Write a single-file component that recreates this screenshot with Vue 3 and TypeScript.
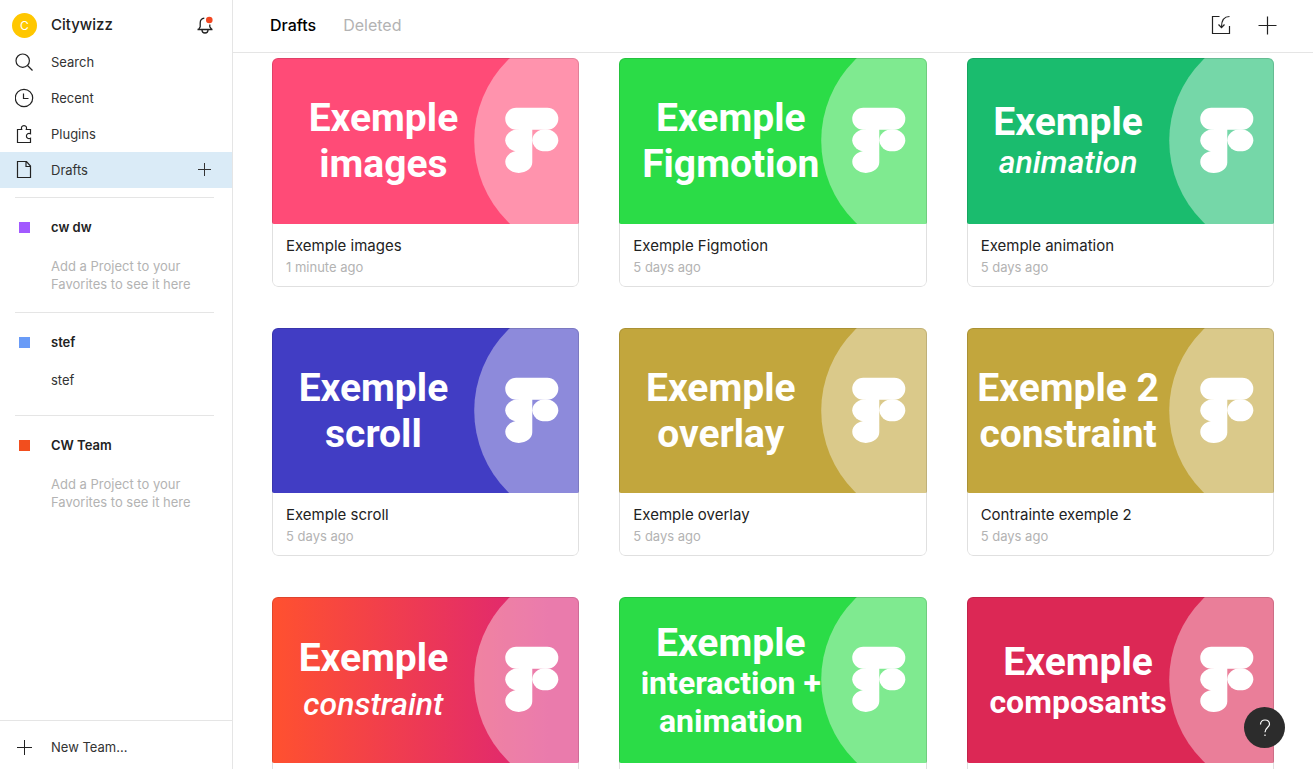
<script setup lang="ts">
import { ref } from 'vue'

interface TitleLine {
  text: string
  kind: 'big' | 'small' | 'italic' | 'italic-tall'
}

interface DraftFile {
  name: string
  edited: string
  color: string
  wide: boolean
  lines: TitleLine[]
}

interface Team {
  name: string
  color: string
  project?: string
}

const big = (text: string): TitleLine => ({ text, kind: 'big' })
const small = (text: string): TitleLine => ({ text, kind: 'small' })

const tab = ref<'drafts' | 'deleted'>('drafts')

const teams: Team[] = [
  { name: 'cw dw', color: 'purple' },
  { name: 'stef', color: 'blue', project: 'stef' },
  { name: 'CW Team', color: 'orange' },
]

const files: DraftFile[] = [
  { name: 'Exemple images', edited: '1 minute ago', color: 'pink', wide: true, lines: [big('Exemple'), big('images')] },
  { name: 'Exemple Figmotion', edited: '5 days ago', color: 'green', wide: true, lines: [big('Exemple'), big('Figmotion')] },
  { name: 'Exemple animation', edited: '5 days ago', color: 'emerald', wide: false, lines: [big('Exemple'), { text: 'animation', kind: 'italic' }] },
  { name: 'Exemple scroll', edited: '5 days ago', color: 'indigo', wide: false, lines: [big('Exemple'), big('scroll')] },
  { name: 'Exemple overlay', edited: '5 days ago', color: 'gold', wide: false, lines: [big('Exemple'), big('overlay')] },
  { name: 'Contrainte exemple 2', edited: '5 days ago', color: 'gold', wide: false, lines: [big('Exemple 2'), big('constraint')] },
  { name: 'Exemple constraint', edited: '5 days ago', color: 'sunset', wide: false, lines: [big('Exemple'), { text: 'constraint', kind: 'italic-tall' }] },
  { name: 'Exemple interaction', edited: '5 days ago', color: 'green', wide: true, lines: [big('Exemple'), small('interaction +'), small('animation')] },
  { name: 'Exemple composants', edited: '5 days ago', color: 'crimson', wide: true, lines: [big('Exemple'), small('composants')] },
]
</script>

<template>
  <div class="app">
    <aside class="sidebar">
      <div class="account">
        <button class="account-button" type="button">
          <span class="slot"><span class="avatar">C</span></span>
          <span class="account-name">Citywizz</span>
        </button>
        <button class="icon-button" type="button" aria-label="Notifications">
          <svg width="20" height="20" viewBox="0 0 20 20" fill="none" stroke="#222" stroke-width="1.3">
            <path d="M9.300 3.200C6.800 3.600 5.200 5.400 5.200 8v3.800L3.500 14.500M2.500 14.500h15M16.800 14.500l-2-2.700V9.500" />
            <path d="M7 15a3 3 0 0 0 6 0" />
            <circle cx="14.300" cy="5" r="3.300" fill="#f24822" stroke="none" />
          </svg>
        </button>
      </div>

      <nav class="nav" aria-label="Files">
        <a class="nav-item" href="#search">
          <span class="slot">
            <svg width="20" height="20" viewBox="1 0 20 20" fill="none" stroke="#222" stroke-width="1.200">
              <circle cx="8.700" cy="8.700" r="6.700" /><path d="M13.500 13.500l5 5" />
            </svg>
          </span>
          Search
        </a>
        <a class="nav-item" href="#recent">
          <span class="slot">
            <svg width="20" height="20" viewBox="1 0 20 20" fill="none" stroke="#222" stroke-width="1.200">
              <circle cx="10" cy="10" r="8.700" /><path d="M9.500 5.500v5h5" />
            </svg>
          </span>
          Recent
        </a>
        <a class="nav-item" href="#plugins">
          <span class="slot">
            <svg width="20" height="20" viewBox="1 0 20 20" fill="none" stroke="#222" stroke-width="1.200">
              <path d="M3.500 5.500h4.200C6.900 3.500 7.800 1.600 10 1.600s3.100 1.900 2.300 3.900h4.200v4.300c-2-1-4.100.100-4.100 2.200s2.100 3.200 4.100 2.200v4.300h-13z" />
            </svg>
          </span>
          Plugins
        </a>
        <div class="nav-row active">
          <a class="nav-item" href="#drafts" aria-current="page">
            <span class="slot">
              <svg width="20" height="20" viewBox="1 0 20 20" fill="none" stroke="#222" stroke-width="1.200">
                <path d="M3.500 1.500h9l4 4.500v11.500h-13zM12 1.500v5h4.500" />
              </svg>
            </span>
            Drafts
          </a>
          <button class="icon-button" type="button" aria-label="New draft">
            <svg width="20" height="20" viewBox="0 0 20 20" fill="none" stroke="#333">
              <path d="M9.500 3v13M3 9.500h13" />
            </svg>
          </button>
        </div>
      </nav>

      <section v-for="team in teams" :key="team.name" class="team">
        <a class="team-name" href="#team">
          <span class="slot"><span class="swatch" :class="team.color"></span></span>
          {{ team.name }}
        </a>
        <a v-if="team.project" class="project" href="#project">{{ team.project }}</a>
        <p v-else class="hint">Add a Project to your<br />Favorites to see it here</p>
      </section>

      <button class="new-team" type="button">
        <span class="slot">
          <svg width="20" height="20" viewBox="1 0 20 20" fill="none" stroke="#222">
            <path d="M10.500 3v15M3 10.500h15" />
          </svg>
        </span>
        New Team...
      </button>
    </aside>

    <main class="main">
      <header class="topbar">
        <button class="tab" :class="{ selected: tab === 'drafts' }" type="button" @click="tab = 'drafts'">Drafts</button>
        <button class="tab" :class="{ selected: tab === 'deleted' }" type="button" @click="tab = 'deleted'">Deleted</button>
        <div class="actions">
          <button class="icon-button" type="button" aria-label="Import">
            <svg width="20" height="20" viewBox="0 0 20 20" fill="none" stroke="#222" stroke-width="1.200">
              <path d="M8.500 1.500h-7v17h17v-7.500" /><path d="M18.500 1.500c-5 0-8 3.500-8 10.500M7.500 9.500l3 3.200 3-3.200" />
            </svg>
          </button>
          <button class="icon-button" type="button" aria-label="New file">
            <svg width="20" height="20" viewBox="0 0 20 20" fill="none" stroke="#222" stroke-width="1.200">
              <path d="M10.500 1.500v18M1.500 10.500h18" />
            </svg>
          </button>
        </div>
      </header>

      <div class="scroller">
        <div class="grid">
          <a v-for="file in files" :key="file.name" class="card" href="#file">
            <div class="thumb" :class="[file.color, { wide: file.wide }]">
              <div class="cover-title">
                <span v-for="line in file.lines" :key="line.text" class="line" :class="line.kind">{{ line.text }}</span>
              </div>
              <svg class="cover-art" viewBox="0 0 307 166" preserveAspectRatio="xMaxYMid slice" aria-hidden="true">
                <circle cx="316" cy="83" r="114" fill="#fff" fill-opacity="0.4" />
                <g fill="#fff">
                  <rect x="233" y="50" width="53" height="22" rx="11" />
                  <ellipse cx="246.500" cy="82.500" rx="13.500" ry="11" />
                  <path d="M246.500 60H260v44.500c0 6-6 10.500-13.500 10.500S233 110 233 104s6-11 13.500-11z" />
                  <ellipse cx="273" cy="82.500" rx="13" ry="11" />
                </g>
              </svg>
            </div>
            <div class="info">
              <span class="file-name">{{ file.name }}</span>
              <span class="edited">{{ file.edited }}</span>
            </div>
          </a>
        </div>
      </div>
    </main>

    <button class="help" type="button" aria-label="Help">
      <svg width="20" height="20" viewBox="0 0 20 20" fill="none" stroke="#fff" stroke-width="1.200">
        <path d="M5.500 6.500c0-2.600 1.900-4.500 4.500-4.500s4.500 1.800 4.500 4.200c0 3.300-4.500 3.600-4.500 8" /><path d="M10 16.500v1.500" />
      </svg>
    </button>
  </div>
</template>

<style>
body {
  margin: 0;
}
</style>

<style scoped>
.app {
  display: flex;
  height: 100vh;
  background: #fff;
  color: #333;
  font-family: Inter, 'Liberation Sans', sans-serif;
  font-size: 13px;
  line-height: 18px;
}

a {
  color: inherit;
  text-decoration: none;
}

button {
  margin: 0;
  padding: 0;
  border: 0;
  background: none;
  color: inherit;
  font: inherit;
  text-align: left;
  cursor: pointer;
}

svg {
  display: block;
}

.sidebar {
  box-sizing: border-box;
  display: flex;
  flex: 0 0 233px;
  flex-direction: column;
  border-right: 1px solid #e5e5e5;
}

.slot {
  display: flex;
  flex: 0 0 49px;
  align-items: center;
  justify-content: center;
  margin-right: 2px;
}

.account {
  display: flex;
  align-items: center;
  justify-content: space-between;
  height: 38px;
  padding: 6px 17px 0 0;
}

.account-button {
  display: flex;
  align-items: center;
}

.avatar {
  width: 25px;
  border-radius: 50%;
  background: #ffc700;
  color: #fff;
  font-size: 12px;
  line-height: 25px;
  text-align: center;
}

.account-name {
  color: #222;
  font-size: 15px;
  font-weight: 450;
}

.nav-row {
  display: flex;
  align-items: center;
  padding-right: 17px;
}

.nav-item {
  box-sizing: border-box;
  display: flex;
  flex: 1;
  align-items: center;
  height: 36px;
  padding-bottom: 1px;
}

.active {
  background: #daebf7;
}

.active .nav-item {
  padding-bottom: 0;
}

.team {
  margin: 9px 18px 0 0;
  padding-top: 21px;
  background: linear-gradient(#e5e5e5, #e5e5e5) 15px 0 / 100% 1px no-repeat;
}

.team + .team {
  margin-top: 19px;
}

.team-name {
  display: flex;
  align-items: center;
  color: #222;
  font-weight: 600;
}

.swatch {
  width: 11px;
  height: 11px;
}

.purple {
  background: #a259ff;
}

.blue {
  background: #699bf7;
}

.orange {
  background: #f24e1e;
}

.hint {
  margin: 21px 0 0 51px;
  color: #b3b3b3;
  white-space: nowrap;
}

.project {
  display: block;
  padding: 20px 0 7px 51px;
}

.new-team {
  display: flex;
  align-items: center;
  height: 49px;
  margin-top: auto;
  padding-top: 4px;
  border-top: 1px solid #e5e5e5;
}

.main {
  display: flex;
  flex: 1;
  flex-direction: column;
  min-width: 0;
}

.topbar {
  display: flex;
  align-items: center;
  gap: 27px;
  height: 50px;
  padding: 0 36px 2px 37px;
  border-bottom: 1px solid #e5e5e5;
}

.tab {
  color: #b3b3b3;
  font-size: 16px;
}

.selected {
  color: #000;
  font-weight: 500;
}

.actions {
  display: flex;
  gap: 26px;
  margin-left: auto;
}

.scroller {
  flex: 1;
  min-height: 0;
  overflow-y: auto;
  scrollbar-width: none;
}

.grid {
  display: grid;
  grid-template-columns: repeat(3, minmax(0, 1fr));
  gap: 41px 40px;
  padding: 5px 39px 40px;
}

.card {
  position: relative;
  overflow: hidden;
  border-radius: 6px;
}

.card::after {
  position: absolute;
  inset: 0;
  border: 1px solid rgba(0, 0, 0, 0.12);
  border-radius: 6px;
  content: '';
}

.thumb {
  display: grid;
  aspect-ratio: 102 / 55;
  overflow: hidden;
  border-radius: 0 0 2px 2px;
}

.thumb > * {
  grid-area: 1 / 1;
}

.cover-art {
  width: 100%;
  height: 100%;
}

.cover-title {
  box-sizing: border-box;
  z-index: 1;
  display: flex;
  flex-direction: column;
  align-items: center;
  justify-content: center;
  width: 66%;
  padding-top: 1px;
  color: #fff;
  font-family: Roboto, 'Liberation Sans', sans-serif;
  font-weight: 700;
  white-space: nowrap;
}

.wide .cover-title {
  padding-left: 20px;
}

.big {
  font-size: 39px;
  line-height: 46px;
}

.big:has(+ .small),
.big:has(+ .italic) {
  line-height: 42px;
}

.small,
.italic,
.italic-tall {
  font-size: 32px;
  line-height: 38px;
}

.italic,
.italic-tall {
  font-style: italic;
  font-weight: 500;
}

.italic-tall {
  line-height: 46px;
}

.pink {
  background: #ff4b77;
}

.green {
  background: #2bdc47;
}

.emerald {
  background: #1abc6e;
}

.indigo {
  background: #413dc4;
}

.gold {
  background: #c2a63d;
}

.sunset {
  background: linear-gradient(90deg, #ff512f, #dd2476 90%);
}

.crimson {
  background: #dc2855;
}

.info {
  box-sizing: border-box;
  display: flex;
  flex-direction: column;
  gap: 2px;
  height: 63px;
  padding: 12px 14px 0;
}

.file-name {
  overflow: hidden;
  color: #222;
  font-size: 15px;
  font-weight: 400;
  line-height: 20px;
  text-overflow: ellipsis;
  white-space: nowrap;
}

.edited {
  color: #b3b3b3;
}

.help {
  position: fixed;
  right: 28px;
  bottom: 21px;
  z-index: 2;
  display: flex;
  align-items: center;
  justify-content: center;
  width: 41px;
  height: 41px;
  border-radius: 50%;
  background: #2c2c2c;
}
</style>
